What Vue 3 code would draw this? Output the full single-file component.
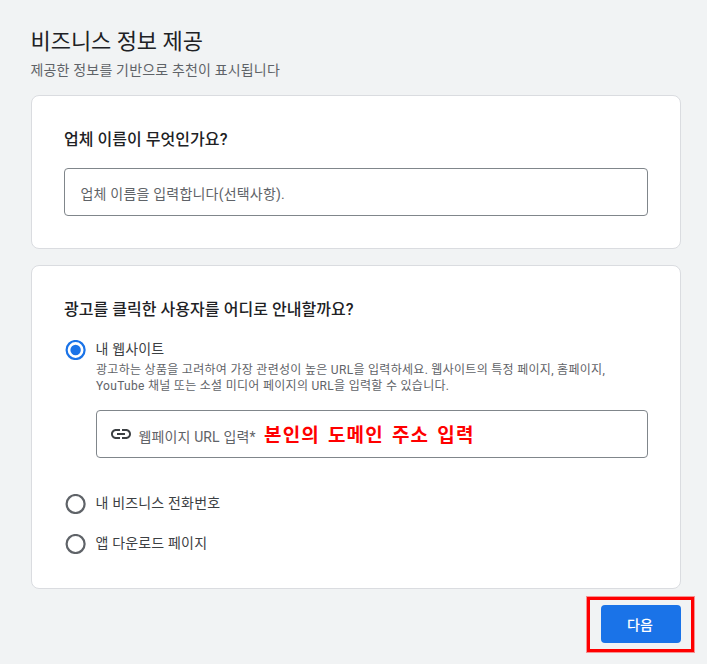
<template>
  <main class="page">
    <header class="page-header">
      <h1>비즈니스 정보 제공</h1>
      <p>제공한 정보를 기반으로 추천이 표시됩니다</p>
    </header>

    <section class="card">
      <h2>업체 이름이 무엇인가요?</h2>
      <label class="field">
        <input v-model="businessName" type="text" placeholder="업체 이름을 입력합니다(선택사항)." />
      </label>
    </section>

    <section class="card destination">
      <h2>광고를 클릭한 사용자를 어디로 안내할까요?</h2>
      <div v-for="option in options" :key="option.id" class="option">
        <button
          type="button"
          role="radio"
          :aria-checked="selected === option.id"
          :class="['radio', { checked: selected === option.id }]"
          @click="selected = option.id"
        >
          <svg viewBox="0 0 21 20" aria-hidden="true">
            <circle class="ring" cx="10.6" cy="10" r="9" />
            <circle v-if="selected === option.id" class="dot" cx="10.6" cy="10" r="5.2" />
          </svg>
        </button>
        <div class="option-body">
          <div class="option-label">{{ option.label }}</div>
          <template v-if="option.id === 'website' && selected === 'website'">
            <p class="hint">
              광고하는 상품을 고려하여 가장 관련성이 높은 URL을 입력하세요. 웹사이트의 특정 페이지, 홈페이지,<br />
              YouTube 채널 또는 소셜 미디어 페이지의 URL을 입력할 수 있습니다.
            </p>
            <div class="field url-field">
              <svg class="link-icon" viewBox="0 0 24 24" aria-hidden="true">
                <path
                  d="M3.9 12c0-1.71 1.39-3.1 3.1-3.1h4V7H7c-2.76 0-5 2.24-5 5s2.24 5 5 5h4v-1.9H7c-1.71 0-3.1-1.39-3.1-3.1zM8 13h8v-2H8v2zm9-6h-4v1.9h4c1.71 0 3.1 1.39 3.1 3.1s-1.39 3.1-3.1 3.1h-4V17h4c2.76 0 5-2.24 5-5s-2.24-5-5-5z"
                />
              </svg>
              <span class="url-label">웹페이지 URL 입력*</span>
              <strong class="note">본인의 도메인 주소 입력</strong>
            </div>
          </template>
        </div>
      </div>
    </section>

    <footer class="actions">
      <div class="highlight">
        <button type="button" class="next">다음</button>
      </div>
    </footer>
  </main>
</template>

<script setup>
import { ref } from 'vue'

const businessName = ref('')
const selected = ref('website')

const options = [
  { id: 'website', label: '내 웹사이트' },
  { id: 'phone', label: '내 비즈니스 전화번호' },
  { id: 'app', label: '앱 다운로드 페이지' },
]
</script>

<style>
body {
  margin: 0;
  background: #f1f3f4;
}
</style>

<style scoped>
.page {
  box-sizing: border-box;
  width: 707px;
  height: 664px;
  padding: 26px 26px 0 31px;
  overflow: hidden;
  background: #f1f3f4;
  color: #202124;
  font-family: Roboto, 'Noto Sans CJK KR', sans-serif;
}

h1,
h2,
p {
  margin: 0;
}

.page-header {
  height: 69px;
  margin-left: -0.5px;
}
h1 {
  font-size: 22px;
  font-weight: 400;
  line-height: 32px;
  letter-spacing: -0.05px;
}
.page-header p {
  color: #5f6368;
  font-size: 14px;
  line-height: 24px;
  letter-spacing: 0.17px;
}

.card {
  box-sizing: border-box;
  width: 650px;
  height: 154px;
  margin-bottom: 16px;
  padding: 32px 32px 0;
  border: 1px solid #dadce0;
  border-radius: 8px;
  background: #fff;
}
.card.destination {
  height: 324px;
  margin-bottom: 0;
}
h2 {
  margin-bottom: 16px;
  font-size: 16px;
  font-weight: 500;
  line-height: 24px;
  letter-spacing: 0.04px;
}
.destination h2 {
  margin-bottom: 15px;
}

.field {
  box-sizing: border-box;
  display: flex;
  align-items: center;
  height: 48px;
  padding: 4px 16px 0 15.5px;
  border: 1px solid #80868b;
  border-radius: 4px;
}
.field input {
  flex: 1;
  padding: 0;
  border: 0;
  outline: 0;
  background: none;
  font: inherit;
  font-size: 14px;
  letter-spacing: 0.2px;
}
.field input::placeholder {
  color: #5f6368;
  opacity: 1;
}

.option {
  display: flex;
  margin-bottom: 16px;
}
.option:nth-of-type(1) {
  margin-bottom: 33px;
}
.radio {
  flex: none;
  width: 21px;
  height: 20px;
  margin: 3px 10px 0 1px;
  padding: 0;
  border: 0;
  background: none;
}
.radio svg {
  display: block;
  width: 21px;
  height: 20px;
}
.ring {
  fill: none;
  stroke: #5f6368;
  stroke-width: 2.2;
}
.checked .ring {
  stroke: #1a73e8;
}
.dot {
  fill: #1a73e8;
}
.option-body {
  flex: 1;
}
.option-label {
  margin-left: -0.5px;
  color: #3c4043;
  font-size: 14px;
  line-height: 24px;
  letter-spacing: 0.17px;
}
.hint {
  padding-top: 1px;
  color: #5f6368;
  font-size: 12px;
  line-height: 16px;
  letter-spacing: 0.29px;
  white-space: nowrap;
}

.url-field {
  margin-top: 16px;
  padding: 0 12px;
}
.link-icon {
  width: 24px;
  height: 24px;
  margin-left: -0.5px;
  fill: #3c4043;
}
.url-label {
  margin: 4px 0 0 6px;
  color: #5f6368;
  font-size: 14px;
  letter-spacing: 0.13px;
}
.note {
  margin: -2px 0 0 8.5px;
  color: #f00;
  font-size: 19px;
  font-weight: 700;
  letter-spacing: 1.1px;
  word-spacing: 2.4px;
}

.actions {
  display: flex;
  justify-content: flex-end;
  margin: 8px -13px 0 0;
}
.highlight {
  padding: 5px 10px 6px 11px;
  border: 3px solid #f00;
  box-shadow: 0 0 0 1px rgba(255, 0, 0, 0.4);
}
.next {
  display: block;
  width: 80px;
  height: 38px;
  padding: 0 2px 0 0;
  border: 0;
  border-radius: 4px;
  background: #1a73e8;
  color: #fff;
  font-family: inherit;
  font-size: 14px;
  font-weight: 500;
}
</style>
